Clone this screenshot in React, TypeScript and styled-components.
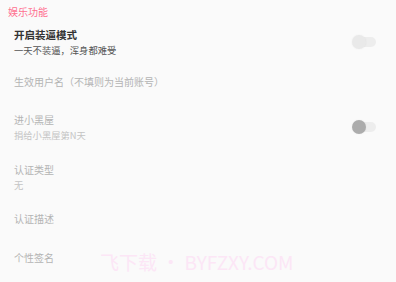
import React from "react";
import styled, { createGlobalStyle } from "styled-components";

const Global = createGlobalStyle`
  html, body { margin: 0; padding: 0; background: #fafafa; }
  body { font-family: "Noto Sans CJK SC", "Noto Sans", sans-serif; }
`;

const Page = styled.div`
  position: relative;
  width: 396px;
  height: 282px;
  overflow: hidden;
  background: #fafafa;
  display: flex;
  flex-direction: column;
`;

const SectionHeader = styled.div`
  height: 23px;
  display: flex;
  align-items: center;
  padding-left: 8px;
  font-size: 10px;
  color: #ff6f8f;
`;

const Row = styled.div<{ $h: number }>`
  height: ${(p) => p.$h}px;
  display: flex;
  align-items: center;
  justify-content: space-between;
  padding: 0 20px 0 14px;
`;

const TextBlock = styled.div`
  display: flex;
  flex-direction: column;
  gap: 3px;
`;

const Title = styled.div<{ $strong?: boolean }>`
  font-size: ${(p) => (p.$strong ? "10.5px" : "10px")};
  line-height: 13px;
  font-weight: ${(p) => (p.$strong ? 700 : 400)};
  color: ${(p) => (p.$strong ? "#333" : "#b4b4b4")};
`;

const Sub = styled.div<{ $dark?: boolean }>`
  font-size: 9.3px;
  line-height: 12px;
  color: ${(p) => (p.$dark ? "#555" : "#c4c4c4")};
`;

const Switch = styled.div<{ $thumb: string }>`
  position: relative;
  width: 24px;
  height: 14px;
  display: flex;
  align-items: center;
  &::before {
    content: "";
    position: absolute;
    left: 3px;
    right: 0;
    height: 10px;
    border-radius: 5px;
    background: #ededed;
  }
  &::after {
    content: "";
    position: absolute;
    left: 0;
    width: 14px;
    height: 14px;
    border-radius: 50%;
    background: ${(p) => p.$thumb};
    box-shadow: 0 0 2px rgba(0, 0, 0, 0.06);
  }
`;

const Watermark = styled.div`
  position: absolute;
  left: 100px;
  top: 248px;
  font-size: 19px;
  color: #fce6f6;
  font-family: "Noto Sans CJK SC", "Noto Sans", sans-serif;
  white-space: nowrap;
`;

export default function App() {
  return (
    <Page>
      <Global />
      <SectionHeader>娱乐功能</SectionHeader>
      <Row $h={38}>
        <TextBlock>
          <Title $strong>开启装逼模式</Title>
          <Sub $dark>一天不装逼，浑身都难受</Sub>
        </TextBlock>
        <Switch $thumb="#e9e9e9" />
      </Row>
      <Row $h={40}>
        <TextBlock>
          <Title>生效用户名（不填则为当前账号）</Title>
        </TextBlock>
      </Row>
      <Row $h={51}>
        <TextBlock>
          <Title>进小黑屋</Title>
          <Sub>捐给小黑屋第N天</Sub>
        </TextBlock>
        <Switch $thumb="#acacac" />
      </Row>
      <Row $h={49}>
        <TextBlock>
          <Title>认证类型</Title>
          <Sub>无</Sub>
        </TextBlock>
      </Row>
      <Row $h={34}>
        <TextBlock>
          <Title>认证描述</Title>
        </TextBlock>
      </Row>
      <Row $h={44}>
        <TextBlock>
          <Title>个性签名</Title>
        </TextBlock>
      </Row>
      <Watermark>飞下载 • BYFZXY.COM</Watermark>
    </Page>
  );
}
